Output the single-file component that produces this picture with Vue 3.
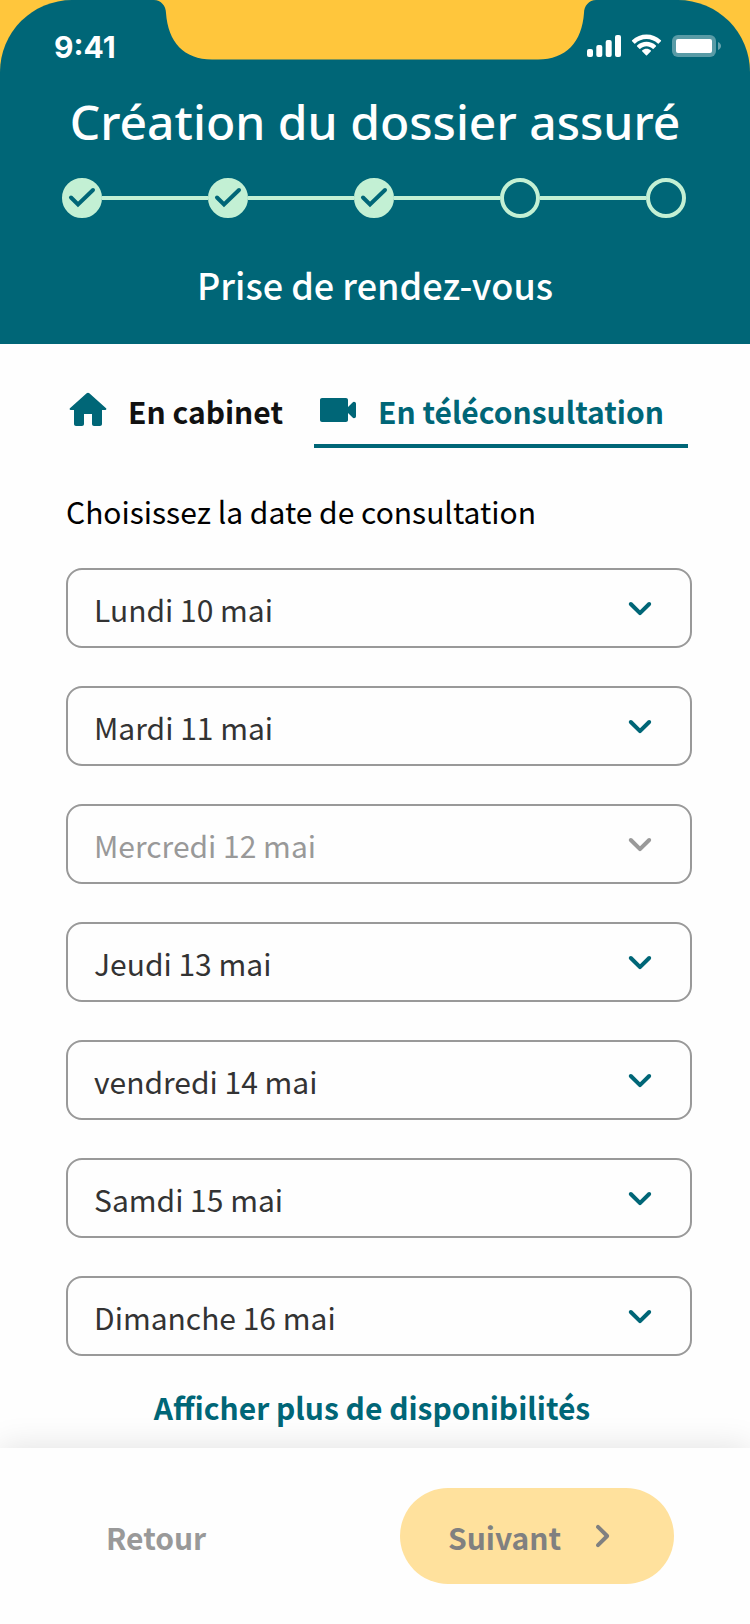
<script setup>
import { ref } from 'vue'

const steps = [
  { id: 1, done: true },
  { id: 2, done: true },
  { id: 3, done: true },
  { id: 4, done: false },
  { id: 5, done: false },
]

const days = ref([
  { label: 'Lundi 10 mai', disabled: false },
  { label: 'Mardi 11 mai', disabled: false },
  { label: 'Mercredi 12 mai', disabled: true },
  { label: 'Jeudi 13 mai', disabled: false },
  { label: 'vendredi 14 mai', disabled: false },
  { label: 'Samdi 15 mai', disabled: false },
  { label: 'Dimanche 16 mai', disabled: false },
])

const mode = ref('tele')
</script>

<template>
  <div class="screen">
    <div class="top">
      <header class="header">
        <svg class="notch" viewBox="0 0 442 60" aria-hidden="true">
          <path d="M0 0C7 0 12 6 12 13C14 42 30 59.5 58 59.5H384C412 59.5 428 42 430 13C430 6 435 0 442 0Z" />
        </svg>

        <div class="status">
          <span class="time">9:41</span>
          <div class="status-icons">
            <svg width="34" height="24" viewBox="0 0 34 24" aria-hidden="true">
              <rect x="0" y="15" width="6" height="8" rx="2" />
              <rect x="9.3" y="11" width="6" height="12" rx="2" />
              <rect x="18.7" y="6" width="6" height="17" rx="2" />
              <rect x="28" y="1" width="6" height="22" rx="2" />
            </svg>
            <svg width="31" height="24" viewBox="0 0 31 24" aria-hidden="true">
              <path d="M15.5 5C19.7 5 23.8 6.600 26.800 9.500C27.100 9.800 27.400 9.800 27.700 9.500L29.900 7.200C30.200 6.900 30.200 6.500 29.900 6.200C21.900 -1.400 9.100 -1.400 1.100 6.200C.8 6.500.8 6.900 1.100 7.200L3.300 9.500C3.600 9.800 3.900 9.800 4.200 9.500C7.200 6.600 11.300 5 15.500 5Z" />
              <path d="M15.500 12.300C17.800 12.300 20 13.200 21.700 14.700C22 15 22.300 15 22.600 14.700L24.900 12.400C25.200 12.100 25.200 11.700 24.900 11.400C19.600 6.500 11.400 6.500 6.100 11.400C5.800 11.700 5.800 12.100 6.100 12.400L8.400 14.700C8.700 15 9 15 9.300 14.700C11 13.200 13.200 12.300 15.500 12.300Z" />
              <path d="M19.900 17.300C20.200 17 20.200 16.600 19.900 16.400C17.400 14.300 13.600 14.300 11.100 16.400C10.800 16.600 10.800 17 11.100 17.300L15 21.200C15.300 21.500 15.700 21.500 16 21.200Z" />
            </svg>
            <svg width="50" height="24" viewBox="0 0 50 24" aria-hidden="true">
              <rect x="0" y="1" width="44" height="22" rx="6" opacity=".35" />
              <rect x="4" y="5" width="36" height="14" rx="2" />
              <path d="M46 8C50 9.500 50 14.500 46 16Z" opacity=".4" />
            </svg>
          </div>
        </div>

        <h1 class="title">Création du dossier assuré</h1>

        <ol class="steps">
          <li v-for="step in steps" :key="step.id" class="step" :class="{ done: step.done }">
            <svg v-if="step.done" class="check" width="40" height="40" viewBox="0 0 40 40" aria-hidden="true">
              <path d="M9 19.500L16 26.500L31 12" />
            </svg>
          </li>
        </ol>

        <h2 class="subtitle">Prise de rendez-vous</h2>
      </header>
    </div>

    <main class="main">
      <nav class="tabs">
        <button type="button" class="tab" :class="{ active: mode === 'cabinet' }" @click="mode = 'cabinet'">
          <svg width="48" height="48" viewBox="0 0 24 24" aria-hidden="true">
            <path d="M10 19v-5h4v5c0 .55.45 1 1 1h3c.55 0 1-.45 1-1v-7h1.700c.46 0 .68-.57.33-.87L12.670 3.600c-.38-.34-.96-.34-1.340 0l-8.360 7.530c-.34.3-.13.87.33.87H5v7c0 .55.45 1 1 1h3c.55 0 1-.45 1-1z" />
          </svg>
          <span>En cabinet</span>
        </button>
        <button type="button" class="tab" :class="{ active: mode === 'tele' }" @click="mode = 'tele'">
          <svg width="48" height="48" viewBox="0 0 24 24" aria-hidden="true">
            <path d="M17 10.500V7c0-.55-.45-1-1-1H4c-.55 0-1 .45-1 1v10c0 .55.45 1 1 1h12c.55 0 1-.45 1-1v-3.500l2.290 2.290c.63.63 1.710.18 1.710-.71V8.910c0-.89-1.080-1.340-1.710-.71L17 10.500z" />
          </svg>
          <span>En téléconsultation</span>
        </button>
      </nav>

      <p id="date-label" class="prompt">Choisissez la date de consultation</p>

      <div class="days" role="group" aria-labelledby="date-label">
        <div v-for="day in days" :key="day.label" class="day">
          <select class="day-select" :aria-label="day.label" :disabled="day.disabled">
            <option>{{ day.label }}</option>
          </select>
          <svg class="chevron" :class="{ muted: day.disabled }" width="48" height="48" viewBox="0 0 24 24" aria-hidden="true">
            <path d="M8.120 9.290L12 13.170l3.880-3.880c.39-.39 1.020-.39 1.410 0 .39.39.39 1.020 0 1.410l-4.590 4.590c-.39.39-1.020.39-1.410 0L6.700 10.700c-.39-.39-.39-1.020 0-1.410.39-.38 1.030-.39 1.420 0z" />
          </svg>
        </div>
      </div>

      <a href="#" class="more">Afficher plus de disponibilités</a>
    </main>

    <footer class="footer">
      <button type="button" class="back">Retour</button>
      <button type="button" class="next" disabled>
        <span>Suivant</span>
        <svg width="48" height="48" viewBox="0 0 24 24" aria-hidden="true">
          <path d="M9.290 15.880L13.170 12 9.290 8.120c-.39-.39-.39-1.020 0-1.410.39-.39 1.020-.39 1.410 0l4.590 4.590c.39.39.39 1.020 0 1.410L10.700 17.300c-.39.39-1.020.39-1.410 0-.38-.39-.39-1.030 0-1.420z" />
        </svg>
      </button>
    </footer>
  </div>
</template>

<style>
body {
  background: #fefefe;
}
</style>

<style scoped>
.screen {
  --teal: #006677;
  --yellow: #ffc63c;
  --mint: #c3f0d4;
  --grey: #999999;
  display: flex;
  flex-direction: column;
  min-height: 100vh;
  font-family: "Noto Sans CJK SC", "Noto Sans", sans-serif;
  font-size: 30px;
  line-height: 46px;
  background: #fefefe;
}

button,
select {
  font: inherit;
  margin: 0;
  border: 0;
  background: none;
}

.top {
  background: var(--yellow);
}

.header {
  position: relative;
  padding-bottom: 31px;
  color: #ffffff;
  background: var(--teal);
  border-radius: 72px 72px 0 0;
}

.notch {
  position: absolute;
  top: 0;
  left: 50%;
  width: 442px;
  margin-left: -221px;
  fill: var(--yellow);
}

.status {
  display: flex;
  align-items: center;
  justify-content: space-between;
  height: 90px;
  padding: 2px 28px 0 54px;
  box-sizing: border-box;
}

.time {
  padding-top: 2px;
  font-family: Inter, sans-serif;
  font-size: 30px;
  font-weight: 700;
}

.status-icons {
  display: flex;
  align-items: center;
  gap: 10px;
  fill: #ffffff;
}

.title {
  margin: 0;
  font-family: "Noto Sans", sans-serif;
  font-size: 48px;
  font-weight: 500;
  line-height: 64px;
  text-align: center;
}

.steps {
  display: flex;
  justify-content: space-between;
  margin: 24px 64px 0 62px;
  padding: 0;
  list-style: none;
}

.step {
  display: flex;
  align-items: center;
  flex: 1;
}

.step:last-child {
  flex: none;
}

.step::before {
  content: "";
  box-sizing: border-box;
  flex: none;
  width: 40px;
  height: 40px;
  border: 4px solid var(--mint);
  border-radius: 50%;
}

.step.done::before {
  background: var(--mint);
}

.step::after {
  content: "";
  flex: 1;
  height: 4px;
  background: var(--mint);
}

.step:last-child::after {
  display: none;
}

.check {
  flex: none;
  margin-left: -40px;
  fill: none;
  stroke: var(--teal);
  stroke-width: 4;
  stroke-linecap: round;
}

.subtitle {
  margin: 37px 0 0;
  font-size: 36px;
  font-weight: 500;
  line-height: 58px;
  text-align: center;
}

.main {
  display: flex;
  flex-direction: column;
  padding: 42px 58px 16px 66px;
}

.tabs {
  display: flex;
  justify-content: space-between;
  margin: 0 4px 0 -2px;
}

.tab {
  display: flex;
  align-items: center;
  gap: 16px;
  padding: 0 24px 10px 0;
  font-weight: 700;
  line-height: 46px;
  color: #111111;
  border-bottom: 4px solid transparent;
  cursor: pointer;
}

.tab span,
.next span {
  padding-top: 2px;
}

.tab svg {
  fill: var(--teal);
}

.tab.active {
  color: var(--teal);
  border-bottom-color: var(--teal);
}

.prompt {
  margin: 40px 0 34px;
  color: #000000;
}

.days {
  display: grid;
  gap: 38px;
}

.day {
  display: grid;
  align-items: center;
}

.day-select {
  grid-area: 1 / 1;
  appearance: none;
  box-sizing: border-box;
  width: 100%;
  height: 80px;
  padding: 2px 80px 0 26px;
  color: #333333;
  border: 2px solid var(--grey);
  border-radius: 16px;
}

.day-select:disabled {
  color: var(--grey);
  opacity: 1;
}

.chevron {
  grid-area: 1 / 1;
  justify-self: end;
  margin-right: 28px;
  fill: var(--teal);
  pointer-events: none;
}

.chevron.muted {
  fill: var(--grey);
}

.more {
  align-self: center;
  margin: 28px 14px 0 0;
  font-weight: 700;
  color: var(--teal);
  text-decoration: none;
}

.footer {
  display: flex;
  align-items: center;
  justify-content: space-between;
  margin-top: auto;
  padding: 40px 76px 40px 80px;
  background: #fefefe;
  box-shadow: 0 0 32px rgba(0, 0, 0, 0.12);
}

.back {
  padding: 26px 24px 24px 26px;
  font-weight: 700;
  color: var(--grey);
  cursor: pointer;
}

.next {
  display: flex;
  align-items: center;
  justify-content: space-between;
  width: 274px;
  height: 96px;
  padding: 0 48px;
  font-weight: 700;
  color: #808080;
  background: #ffe19d;
  border-radius: 48px;
}

.next svg {
  fill: #808080;
}
</style>
